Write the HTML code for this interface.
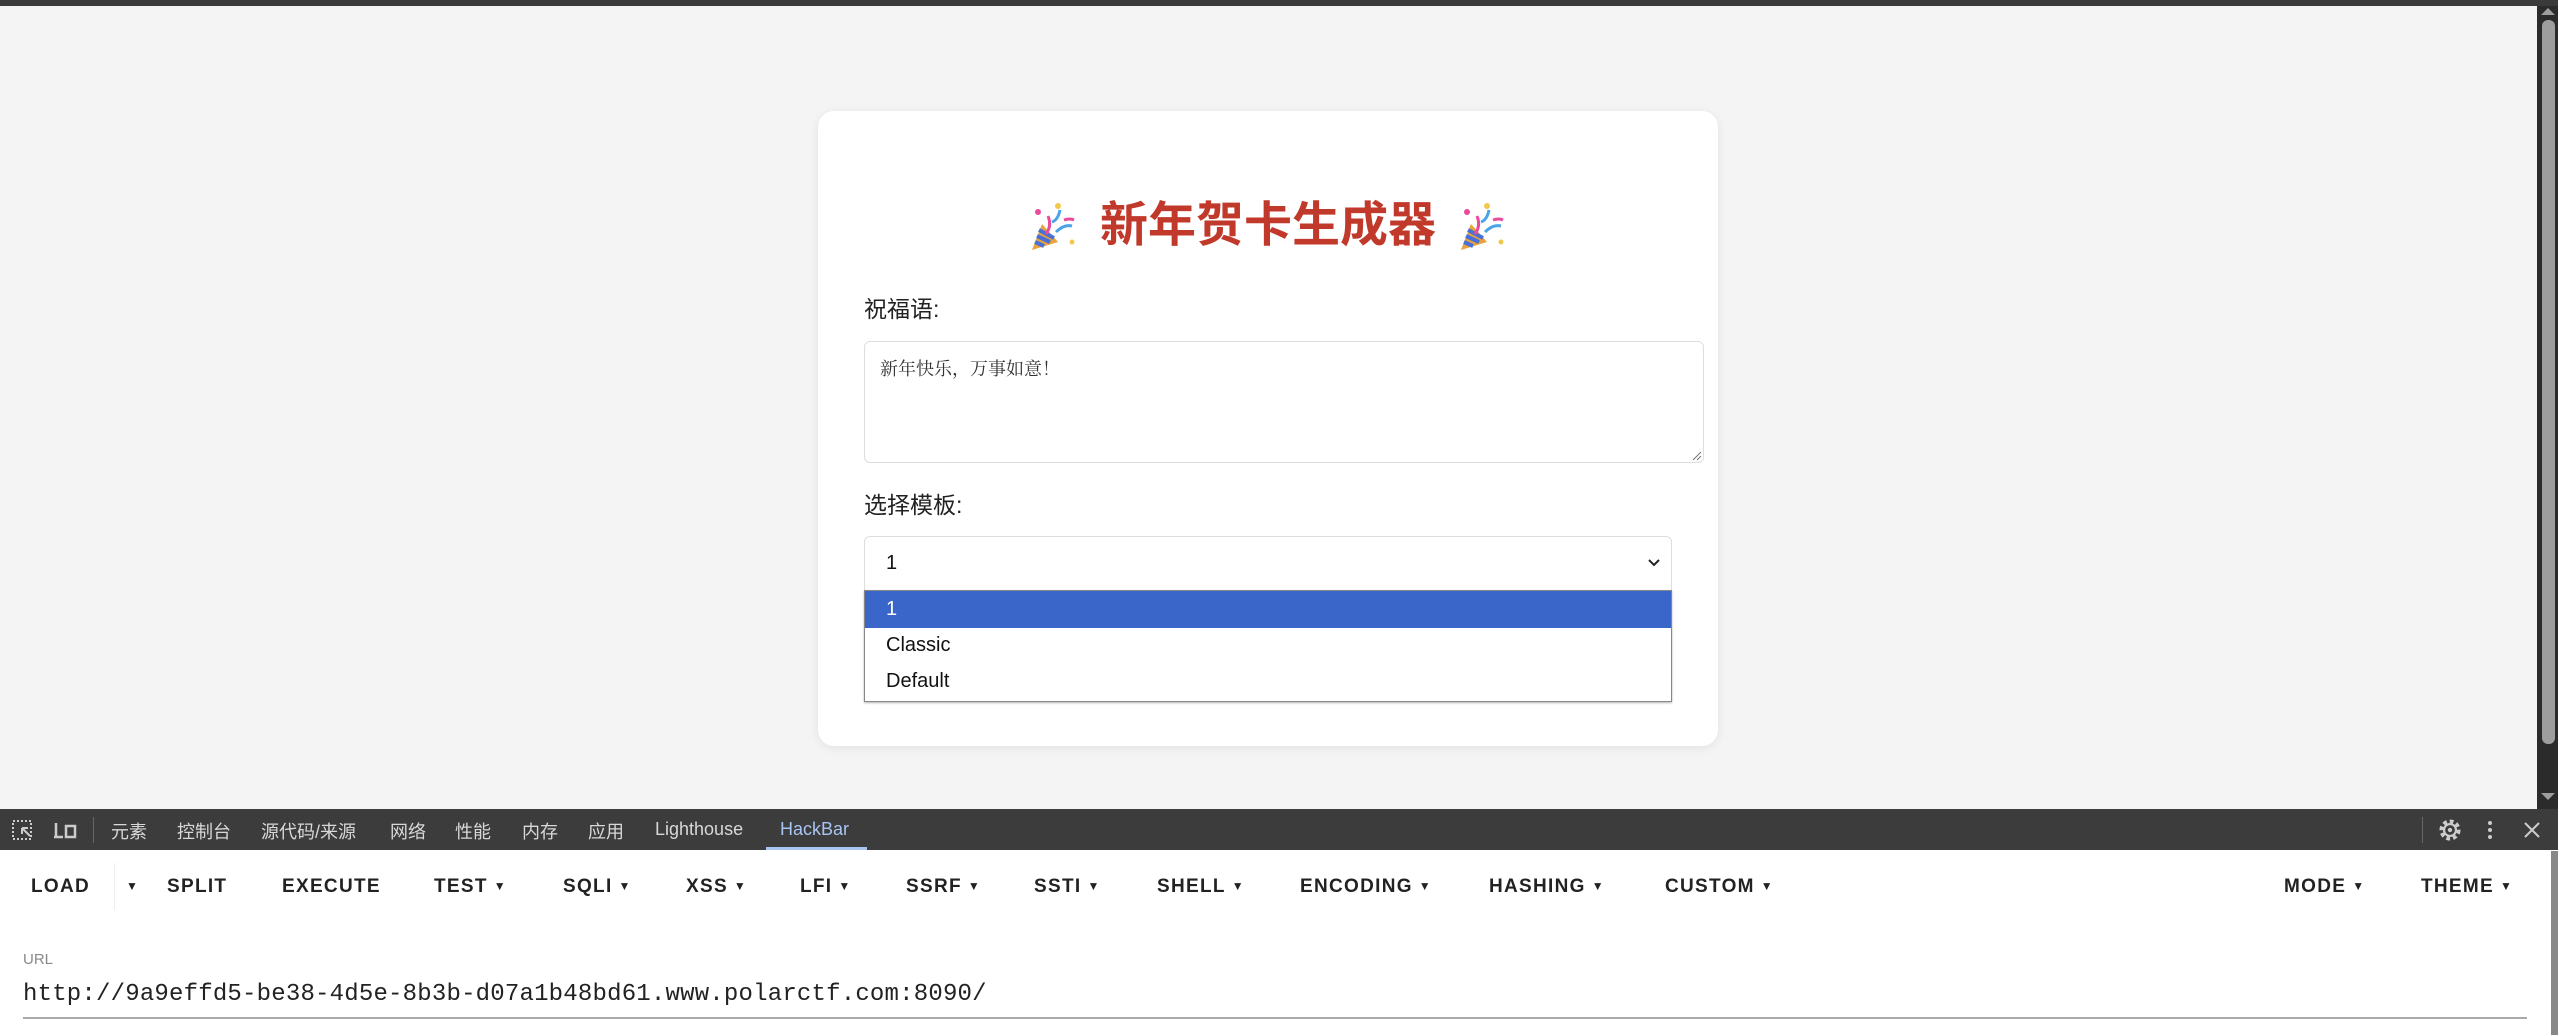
<!DOCTYPE html>
<html><head><meta charset="utf-8"><style>
*{margin:0;padding:0;box-sizing:border-box}
body{width:2558px;height:1035px;overflow:hidden;background:#f4f4f4;position:relative;font-family:"Liberation Sans","Noto Sans CJK SC",sans-serif}
.a{position:absolute}
.topbar{left:0;top:0;width:2558px;height:6px;background:#3a3a3a}
.card{left:818px;top:111px;width:900px;height:635px;background:#fff;border-radius:16px;box-shadow:0 2px 10px rgba(0,0,0,.08)}
.title{left:1100px;top:196px;font-size:48px;font-weight:bold;color:#c0392b;white-space:nowrap;line-height:60px}
.lbl{font-size:23px;color:#222;line-height:30px}
.ta{left:864px;top:341px;width:840px;height:122px;border:1px solid #ddd;border-radius:6px;background:#fff}
.tat{left:880px;top:355px;font-family:"Noto Serif CJK SC","Liberation Serif",serif;font-size:18px;color:#333}
.sel{left:864px;top:536px;width:808px;height:55px;border:1px solid #ddd;border-radius:6px 6px 0 0;background:#fff}
.dd{left:864px;top:590px;width:808px;height:112px;border:1px solid #888;background:#fff;box-shadow:0 1px 2px rgba(0,0,0,.3)}
.opt{position:absolute;left:21px;font-size:20px;color:#111}
.dev{left:0;top:809px;width:2558px;height:41px;background:#3c3c3c}
.tab{position:absolute;top:9px;font-size:18px;color:#d8d8d8;white-space:nowrap}
.hb{left:0;top:850px;width:2558px;height:185px;background:#fff}
.btn{position:absolute;top:876px;font-size:19px;font-weight:bold;color:#222;letter-spacing:1.3px;white-space:nowrap;font-family:"Liberation Sans",sans-serif}
.btn i{font-style:normal;font-size:12px;margin-left:6px;vertical-align:2px}
.sb{left:2537px;top:6px;width:21px;height:803px;background:#2b2b2b}
.thumb{left:2542px;top:20px;width:13px;height:724px;background:#9e9e9e;border-radius:6px}
</style></head><body>
<div class="a topbar"></div>
<div class="a card"></div>
<svg class="a" style="left:1028px;top:202px" width="50" height="52" viewBox="0 0 50 52"><path d="M4 48 L14 22 L30 40 Z" fill="#e8a33a"/><path d="M7 40 L16 44 M9 34 L22 40 M11 28 L26 36" stroke="#4a6fd8" stroke-width="4"/><circle cx="10" cy="10" r="3" fill="#e94a9b"/><circle cx="30" cy="4" r="3" fill="#f2c84b"/><path d="M20 14 q4 10 -2 18" stroke="#e94a9b" stroke-width="3" fill="none"/><path d="M32 8 q-2 10 -8 12" stroke="#4aa3e8" stroke-width="3" fill="none"/><path d="M28 30 q8 -8 16 -6" stroke="#4aa3e8" stroke-width="3" fill="none"/><path d="M36 18 q6 -2 10 0" stroke="#e94a9b" stroke-width="3" fill="none"/><circle cx="44" cy="40" r="2.5" fill="#f2c84b"/></svg>
<div class="a title">新年贺卡生成器</div>
<svg class="a" style="left:1457px;top:202px" width="50" height="52" viewBox="0 0 50 52"><path d="M4 48 L14 22 L30 40 Z" fill="#e8a33a"/><path d="M7 40 L16 44 M9 34 L22 40 M11 28 L26 36" stroke="#4a6fd8" stroke-width="4"/><circle cx="10" cy="10" r="3" fill="#e94a9b"/><circle cx="30" cy="4" r="3" fill="#f2c84b"/><path d="M20 14 q4 10 -2 18" stroke="#e94a9b" stroke-width="3" fill="none"/><path d="M32 8 q-2 10 -8 12" stroke="#4aa3e8" stroke-width="3" fill="none"/><path d="M28 30 q8 -8 16 -6" stroke="#4aa3e8" stroke-width="3" fill="none"/><path d="M36 18 q6 -2 10 0" stroke="#e94a9b" stroke-width="3" fill="none"/><circle cx="44" cy="40" r="2.5" fill="#f2c84b"/></svg>
<div class="a lbl" style="left:864px;top:294px">祝福语:</div>
<div class="a ta"></div>
<svg class="a" style="left:1692px;top:451px" width="10" height="10"><path d="M1 9 L9 1 M5 9 L9 5" stroke="#777" stroke-width="1"/></svg>
<div class="a tat">新年快乐，万事如意！</div>
<div class="a lbl" style="left:864px;top:490px">选择模板:</div>
<div class="a sel"><span class="opt" style="top:15px">1</span><svg style="position:absolute;right:10px;top:21px" width="14" height="10"><path d="M2 2 L7 7 L12 2" stroke="#222" stroke-width="2" fill="none"/></svg></div>
<div class="a dd">
<div style="position:absolute;left:0;top:0;width:806px;height:37px;background:#3a66c9"></div>
<span class="opt" style="top:7px;color:#fff">1</span>
<span class="opt" style="top:43px">Classic</span>
<span class="opt" style="top:79px">Default</span>
</div>
<div class="a sb"></div>
<div class="a thumb"></div>
<svg class="a" style="left:2541px;top:8px" width="14" height="8"><path d="M0 7 L7 0 L14 7Z" fill="#9e9e9e"/></svg>
<svg class="a" style="left:2541px;top:793px" width="14" height="8"><path d="M0 0 L7 7 L14 0Z" fill="#9e9e9e"/></svg>
<div class="a dev">
<svg style="position:absolute;left:12px;top:11px" width="22" height="20"><rect x="1" y="1" width="18" height="18" fill="none" stroke="#ccc" stroke-width="2" stroke-dasharray="2 2"/><path d="M10 8 L18 16 M10 8 L10 14 M10 8 L16 8" stroke="#ccc" stroke-width="2"/></svg>
<svg style="position:absolute;left:52px;top:12px" width="26" height="18"><path d="M2 16 H11 M4 2 V16" stroke="#ccc" stroke-width="2.5"/><rect x="14" y="5" width="9" height="11" fill="none" stroke="#ccc" stroke-width="2.5"/></svg>
<div style="position:absolute;left:93px;top:8px;width:1px;height:26px;background:#666"></div>
<span class="tab" style="left:111px">元素</span>
<span class="tab" style="left:177px">控制台</span>
<span class="tab" style="left:261px">源代码/来源</span>
<span class="tab" style="left:390px">网络</span>
<span class="tab" style="left:455px">性能</span>
<span class="tab" style="left:522px">内存</span>
<span class="tab" style="left:588px">应用</span>
<span class="tab" style="left:655px;top:10px">Lighthouse</span>
<span class="tab" style="left:780px;top:10px;color:#a8c4f0">HackBar</span>
<div style="position:absolute;left:766px;top:38px;width:101px;height:3px;background:#a8c4f0"></div>
<div style="position:absolute;left:2422px;top:8px;width:1px;height:26px;background:#666"></div>
<svg style="position:absolute;left:2437px;top:8px" width="26" height="26" viewBox="0 0 24 24"><circle cx="12" cy="12" r="8" fill="none" stroke="#ccc" stroke-width="3.5" stroke-dasharray="3.5 2.7"/><circle cx="12" cy="12" r="5.5" fill="none" stroke="#ccc" stroke-width="2"/><circle cx="12" cy="12" r="2" fill="#ccc"/></svg>
<svg style="position:absolute;left:2486px;top:11px" width="8" height="22"><circle cx="4" cy="3" r="2" fill="#ccc"/><circle cx="4" cy="10" r="2" fill="#ccc"/><circle cx="4" cy="17" r="2" fill="#ccc"/></svg>
<svg style="position:absolute;left:2523px;top:12px" width="18" height="18"><path d="M2 2 L16 16 M16 2 L2 16" stroke="#ccc" stroke-width="2"/></svg>
</div>
<div class="a hb"></div>
<div class="a" style="left:114px;top:863px;width:1px;height:47px;background:#eee"></div>
<span class="btn" style="left:31px">LOAD</span>
<span class="btn" style="left:120px"><i>▼</i></span>
<span class="btn" style="left:167px">SPLIT</span>
<span class="btn" style="left:282px">EXECUTE</span>
<span class="btn" style="left:434px">TEST<i>▼</i></span>
<span class="btn" style="left:563px">SQLI<i>▼</i></span>
<span class="btn" style="left:686px">XSS<i>▼</i></span>
<span class="btn" style="left:800px">LFI<i>▼</i></span>
<span class="btn" style="left:906px">SSRF<i>▼</i></span>
<span class="btn" style="left:1034px">SSTI<i>▼</i></span>
<span class="btn" style="left:1157px">SHELL<i>▼</i></span>
<span class="btn" style="left:1300px">ENCODING<i>▼</i></span>
<span class="btn" style="left:1489px">HASHING<i>▼</i></span>
<span class="btn" style="left:1665px">CUSTOM<i>▼</i></span>
<span class="btn" style="left:2284px">MODE<i>▼</i></span>
<span class="btn" style="left:2421px">THEME<i>▼</i></span>
<div class="a" style="left:23px;top:951px;font-size:15px;color:#888">URL</div>
<div class="a" style="left:23px;top:981px;font-size:24px;color:#222;font-family:'Liberation Mono',monospace;letter-spacing:0.2px">http://9a9effd5-be38-4d5e-8b3b-d07a1b48bd61.www.polarctf.com:8090/</div>
<div class="a" style="left:23px;top:1017px;width:2504px;height:2px;background:#aaa"></div>
<div class="a" style="left:2551px;top:851px;width:7px;height:184px;background:#888"></div>
</body></html>
